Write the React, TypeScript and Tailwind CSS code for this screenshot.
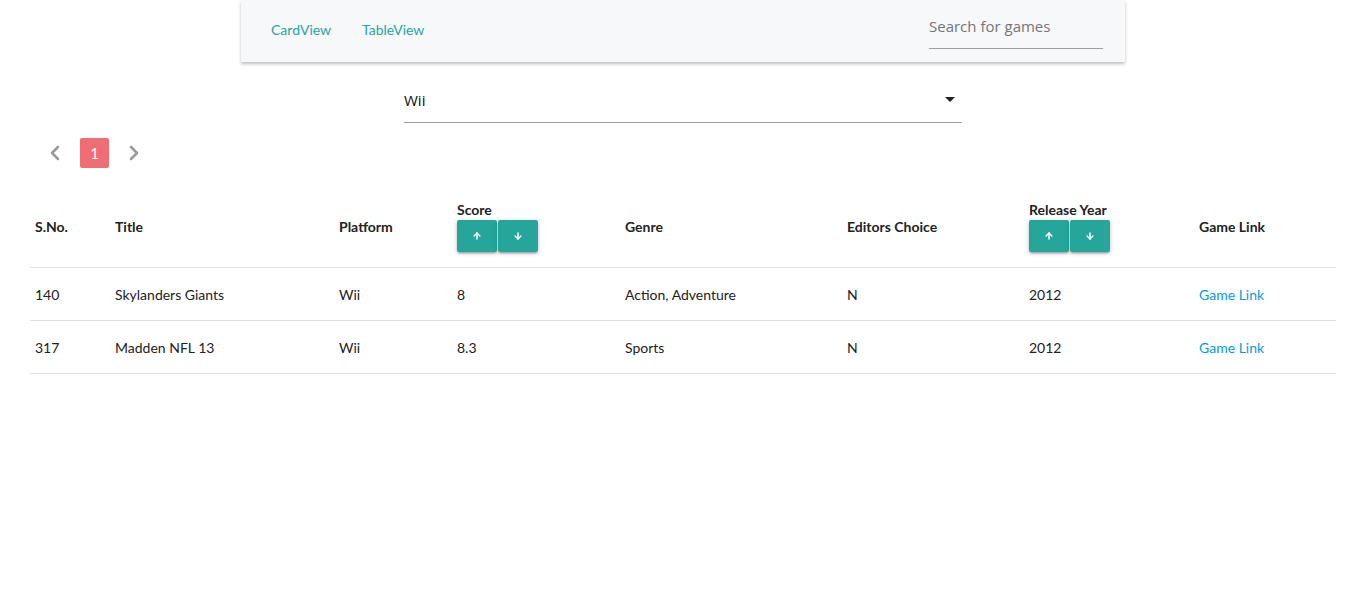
import { ChevronLeft, ChevronRight, ArrowUp, ArrowDown } from 'lucide-react'

const games = [
    { id: 140, title: 'Skylanders Giants', platform: 'Wii', score: '8', genre: 'Action, Adventure', editors: 'N', year: '2012' },
    { id: 317, title: 'Madden NFL 13', platform: 'Wii', score: '8.3', genre: 'Sports', editors: 'N', year: '2012' },
]

function SortButtons() {
    return (
        <div className="flex gap-px">
            <button className="w-10 h-8 bg-[#26a69a] rounded-[2px] shadow-[0_2px_2px_rgba(0,0,0,0.14),0_3px_1px_-2px_rgba(0,0,0,0.12),0_1px_5px_rgba(0,0,0,0.2)] flex items-center justify-center text-white">
                <ArrowUp size={10} strokeWidth={3.5} />
            </button>
            <button className="w-10 h-8 bg-[#26a69a] rounded-[2px] shadow-[0_2px_2px_rgba(0,0,0,0.14),0_3px_1px_-2px_rgba(0,0,0,0.12),0_1px_5px_rgba(0,0,0,0.2)] flex items-center justify-center text-white">
                <ArrowDown size={10} strokeWidth={3.5} />
            </button>
        </div>
    )
}

export default function App() {
    return (
        <main className="min-h-screen bg-white font-['Lato',sans-serif] text-[14px] text-[#222]">
            {/* Navbar */}
            <nav className="mx-auto w-[884px] h-[62px] bg-[#f7f8fa] shadow-[0_2px_3px_rgba(0,0,0,0.25)] flex items-center justify-between pl-[30px] pr-[22px]">
                <div className="flex gap-[31px] text-[#26a69a] text-[14px] -mt-[4px]">
                    <a>CardView</a>
                    <a>TableView</a>
                </div>
                <div className="w-[174px] border-b border-[#9e9e9e] pb-[10px] mt-[2px] font-['Open_Sans',sans-serif] text-[15px] text-[#757575]">
                    Search for games
                </div>
            </nav>

            {/* Platform select */}
            <div className="mx-auto w-[558px] mt-[27px] h-[34px] border-b border-[#9e9e9e] flex items-start justify-between font-['Open_Sans',sans-serif] text-[15px] text-[#111]">
                <span className="leading-[22px]">Wii</span>
                <svg width="12" height="22" viewBox="0 0 12 22" className="mr-[6px]">
                    <path d="M1 8 L11 8 L6 13 Z" fill="#222" />
                </svg>
            </div>

            {/* Pagination */}
            <div className="flex items-center mt-[15px] ml-[43px] h-[30px]">
                <ChevronLeft size={24} strokeWidth={2.5} className="text-[#999]" />
                <span className="ml-[13px] w-[29px] h-[30px] bg-[#ee6e73] rounded-[2px] text-white text-[15px] flex items-center justify-center">1</span>
                <ChevronRight size={24} strokeWidth={2.5} className="ml-[13px] text-[#999]" />
            </div>

            {/* Table */}
            <div className="px-[30px] mt-[17px]">
                <table className="w-full table-fixed border-collapse">
                    <colgroup>
                        <col className="w-[80px]" />
                        <col className="w-[224px]" />
                        <col className="w-[118px]" />
                        <col className="w-[168px]" />
                        <col className="w-[222px]" />
                        <col className="w-[182px]" />
                        <col className="w-[170px]" />
                        <col />
                    </colgroup>
                    <thead>
                        <tr className="border-b border-[#e0e0e0] text-left font-bold">
                            <th className="px-[5px] py-[15px] align-middle">S.No.</th>
                            <th className="px-[5px] py-[15px] align-middle">Title</th>
                            <th className="px-[5px] py-[15px] align-middle">Platform</th>
                            <th className="px-[5px] py-[15px] align-middle">
                                <div className="leading-[20px]">Score</div>
                                <SortButtons />
                            </th>
                            <th className="px-[5px] py-[15px] align-middle">Genre</th>
                            <th className="px-[5px] py-[15px] align-middle">Editors Choice</th>
                            <th className="px-[5px] py-[15px] align-middle">
                                <div className="leading-[20px]">Release Year</div>
                                <SortButtons />
                            </th>
                            <th className="px-[5px] py-[15px] align-middle">Game Link</th>
                        </tr>
                    </thead>
                    <tbody>
                        {games.map((g) => (
                            <tr key={g.id} className="border-b border-[#e0e0e0] h-[53px]">
                                <td className="px-[5px]">{g.id}</td>
                                <td className="px-[5px]">{g.title}</td>
                                <td className="px-[5px]">{g.platform}</td>
                                <td className="px-[5px]">{g.score}</td>
                                <td className="px-[5px]">{g.genre}</td>
                                <td className="px-[5px]">{g.editors}</td>
                                <td className="px-[5px]">{g.year}</td>
                                <td className="px-[5px]">
                                    <a className="text-[#039be5]">Game Link</a>
                                </td>
                            </tr>
                        ))}
                    </tbody>
                </table>
            </div>
        </main>
    )
}
